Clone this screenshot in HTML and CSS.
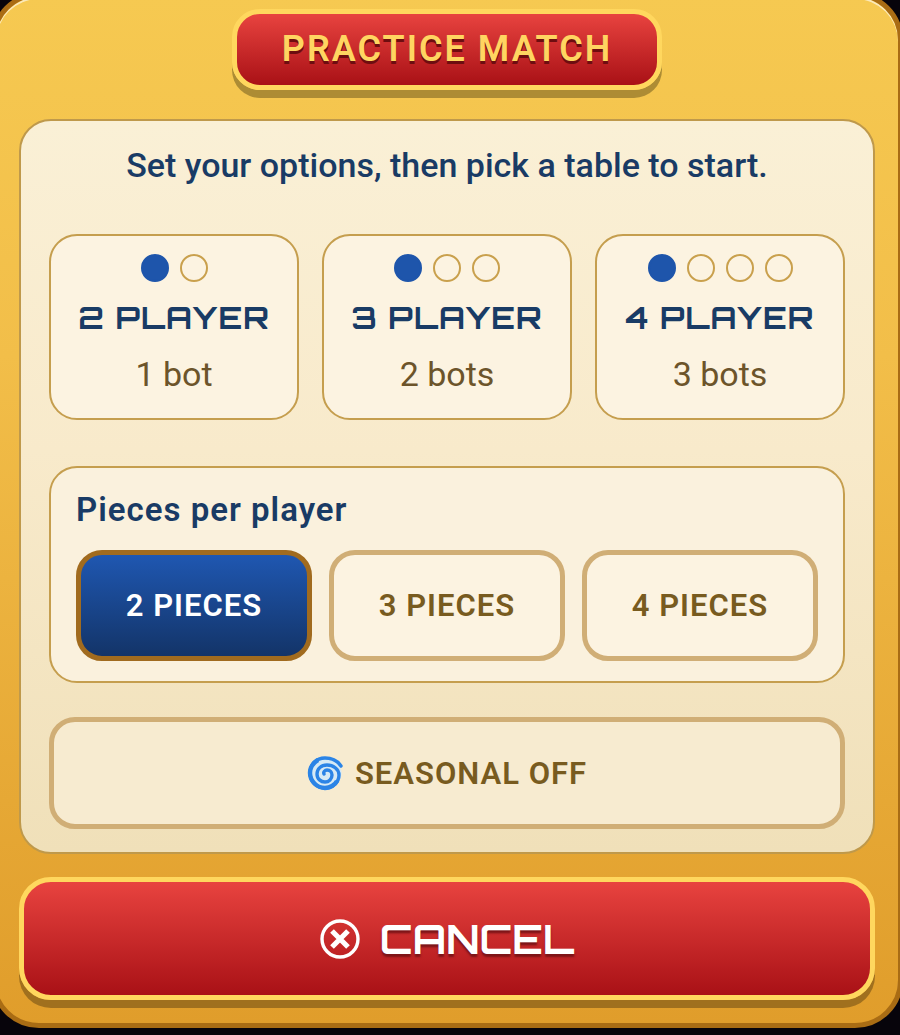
FILE: index.html
```html
<!DOCTYPE html>
<html lang="en">
<head>
    <meta charset="UTF-8">
    <meta name="viewport" content="width=device-width, initial-scale=1.0">
    <title>Practice Match</title>
    <link rel="stylesheet" href="styles.css">
</head>
<body>
    <main class="dialog">
        <h1 class="title">PRACTICE MATCH</h1>
        <section class="panel">
            <p class="intro">Set your options, then pick a table to start.</p>
            <div class="tables">
                <button class="table-card" type="button">
                    <span class="seats"><i class="seat you"></i><i class="seat"></i></span>
                    <span class="table-name">2 PLAYER</span>
                    <span class="bots">1 bot</span>
                </button>
                <button class="table-card" type="button">
                    <span class="seats"><i class="seat you"></i><i class="seat"></i><i class="seat"></i></span>
                    <span class="table-name">3 PLAYER</span>
                    <span class="bots">2 bots</span>
                </button>
                <button class="table-card" type="button">
                    <span class="seats"><i class="seat you"></i><i class="seat"></i><i class="seat"></i><i class="seat"></i></span>
                    <span class="table-name">4 PLAYER</span>
                    <span class="bots">3 bots</span>
                </button>
            </div>
            <div class="pieces" role="group" aria-labelledby="pieces-label">
                <h2 id="pieces-label" class="pieces-label">Pieces per player</h2>
                <div class="pieces-options">
                    <button class="option active" type="button" aria-pressed="true">2 PIECES</button>
                    <button class="option" type="button" aria-pressed="false">3 PIECES</button>
                    <button class="option" type="button" aria-pressed="false">4 PIECES</button>
                </div>
            </div>
            <button id="seasonal" class="option seasonal" type="button" aria-pressed="false">
                <svg class="swirl" viewBox="0 0 36 36" aria-hidden="true">
                    <circle cx="18" cy="18" r="16.5" fill="#d6eaf5"/>
                    <path d="M34 11C30 5 24 3 18 3C9 3 3 10 3 18C3 27 10 33 18 33C26 33 32 27 32 20C32 14 26 10 20 10C14 10 10 14 10 19C10 24 14 27 18 27C22 27 25 24 25 20C25 17 23 15 20 15C18 15 16 17 17 19" fill="none" stroke="#2b84e6" stroke-width="3.4" stroke-linecap="round"/>
                    <path d="M11 5C6 8 3 13 3 18C3 26 10 33 18 33C23 33 28 30 30 26" fill="none" stroke="#2b84e6" stroke-width="4.4"/>
                </svg>
                SEASONAL OFF
            </button>
        </section>
        <button id="cancel" class="cancel" type="button">
            <svg class="cancel-icon" viewBox="0 0 40 40" aria-hidden="true">
                <circle cx="20" cy="20" r="18" fill="none" stroke="#fff" stroke-width="3.4"/>
                <path d="M12 12L28 28M28 12L12 28" stroke="#fff" stroke-width="5.2"/>
            </svg>
            CANCEL
        </button>
    </main>

    <script>
        const options = document.querySelectorAll('.pieces-options .option');

        options.forEach((option) => {
            option.addEventListener('click', () => {
                options.forEach((other) => {
                    other.classList.toggle('active', other === option);
                    other.setAttribute('aria-pressed', other === option);
                });
            });
        });
    </script>
</body>
</html>
```

FILE: styles.css
```css
* {
    box-sizing: border-box;
}
body {
    margin: 0;
    overflow: hidden;
    background: #07040b;
    font-family: Roboto, sans-serif;
    color: #193b65;
}
button {
    font-family: inherit;
    cursor: pointer;
}
/* the dialog bleeds slightly past the window on the top and sides */
.dialog {
    display: flex;
    flex-direction: column;
    margin: -8px -3px 0 -9px;
    padding: 12px 23px 23px;
    border: 5px solid #a96c14;
    border-radius: 48px;
    background: linear-gradient(#f6c951, #f2be49 35%, #e09d2b);
    box-shadow: inset 0 2px 0 rgba(255, 255, 255, 0.6);
}
.title {
    align-self: center;
    margin: 0 0 29px;
    padding: 14px 45px 15px;
    border: 5px solid #ffd75e;
    border-radius: 28px;
    background: linear-gradient(#e8433f, #a91116);
    box-shadow: 0 8px 0 #ad8c34;
    color: #ffd561;
    font-size: 36px;
    line-height: 42px;
    font-weight: 600;
    letter-spacing: 2px;
    text-shadow: 0 3px 0 #6e0d10;
}
.panel {
    padding: 24px 28px 23px;
    border: 2px solid #bf994b;
    border-radius: 32px;
    background: linear-gradient(#faf0d6, #f8eacb 45%, #f0e0b9);
}
.intro {
    margin: 0 0 49px;
    text-align: center;
    font-size: 34px;
    line-height: 40px;
    font-weight: 500;
}
.tables {
    display: grid;
    grid-template-columns: repeat(3, 1fr);
    gap: 23px;
    margin-bottom: 46px;
}
.table-card {
    display: flex;
    flex-direction: column;
    align-items: center;
    gap: 16px;
    padding: 18px 0 24px;
    border: 2px solid #c59e4e;
    border-radius: 28px;
    background: #fcf3e1;
    white-space: nowrap;
}
.seats {
    display: flex;
    gap: 11px;
}
.seat {
    width: 28px;
    height: 28px;
    border: 2px solid #c9a04d;
    border-radius: 50%;
}
.seat.you {
    background: #1e55ab;
    border-color: #1e55ab;
}
.table-name {
    color: #193b65;
    font-family: Orbitron, "DejaVu Sans", sans-serif;
    font-size: 31px;
    line-height: 40px;
    font-weight: 700;
    letter-spacing: 1px;
}
.bots {
    color: #6c542a;
    font-size: 34px;
    line-height: 40px;
}
.pieces {
    margin-bottom: 34px;
    padding: 22px 25px 20px;
    border: 2px solid #c59e4e;
    border-radius: 28px;
    background: #faf1dd;
}
.pieces-label {
    margin: 0 0 20px;
    font-size: 33px;
    line-height: 40px;
    font-weight: 600;
    letter-spacing: 1px;
}
.pieces-options {
    display: grid;
    grid-template-columns: repeat(3, 1fr);
    gap: 17px;
}
.option {
    height: 111px;
    border: 5px solid #d0ae76;
    border-radius: 26px;
    background: #fcf3e1;
    color: #785b1f;
    font-size: 31px;
    font-weight: 600;
    letter-spacing: 1px;
}
.option.active {
    border-color: #a16b1e;
    background: linear-gradient(#1f57b1, #133468);
    color: #fff;
}
.seasonal {
    display: flex;
    align-items: center;
    justify-content: center;
    gap: 12px;
    width: 100%;
    height: 112px;
    background: #f7ebd0;
}
.swirl {
    width: 36px;
    height: 36px;
}
.cancel {
    display: flex;
    align-items: center;
    justify-content: center;
    gap: 20px;
    height: 123px;
    margin-top: 23px;
    border: 5px solid #ffd75e;
    border-radius: 32px;
    background: linear-gradient(#e8433f, #a91116);
    box-shadow: 0 8px 0 #a0701e;
    color: #fff;
    font-family: Orbitron, "DejaVu Sans", sans-serif;
    font-size: 40px;
    font-weight: 700;
    text-shadow: 0 3px 2px #7d1518;
}
.cancel-icon {
    width: 40px;
    height: 40px;
}
```
